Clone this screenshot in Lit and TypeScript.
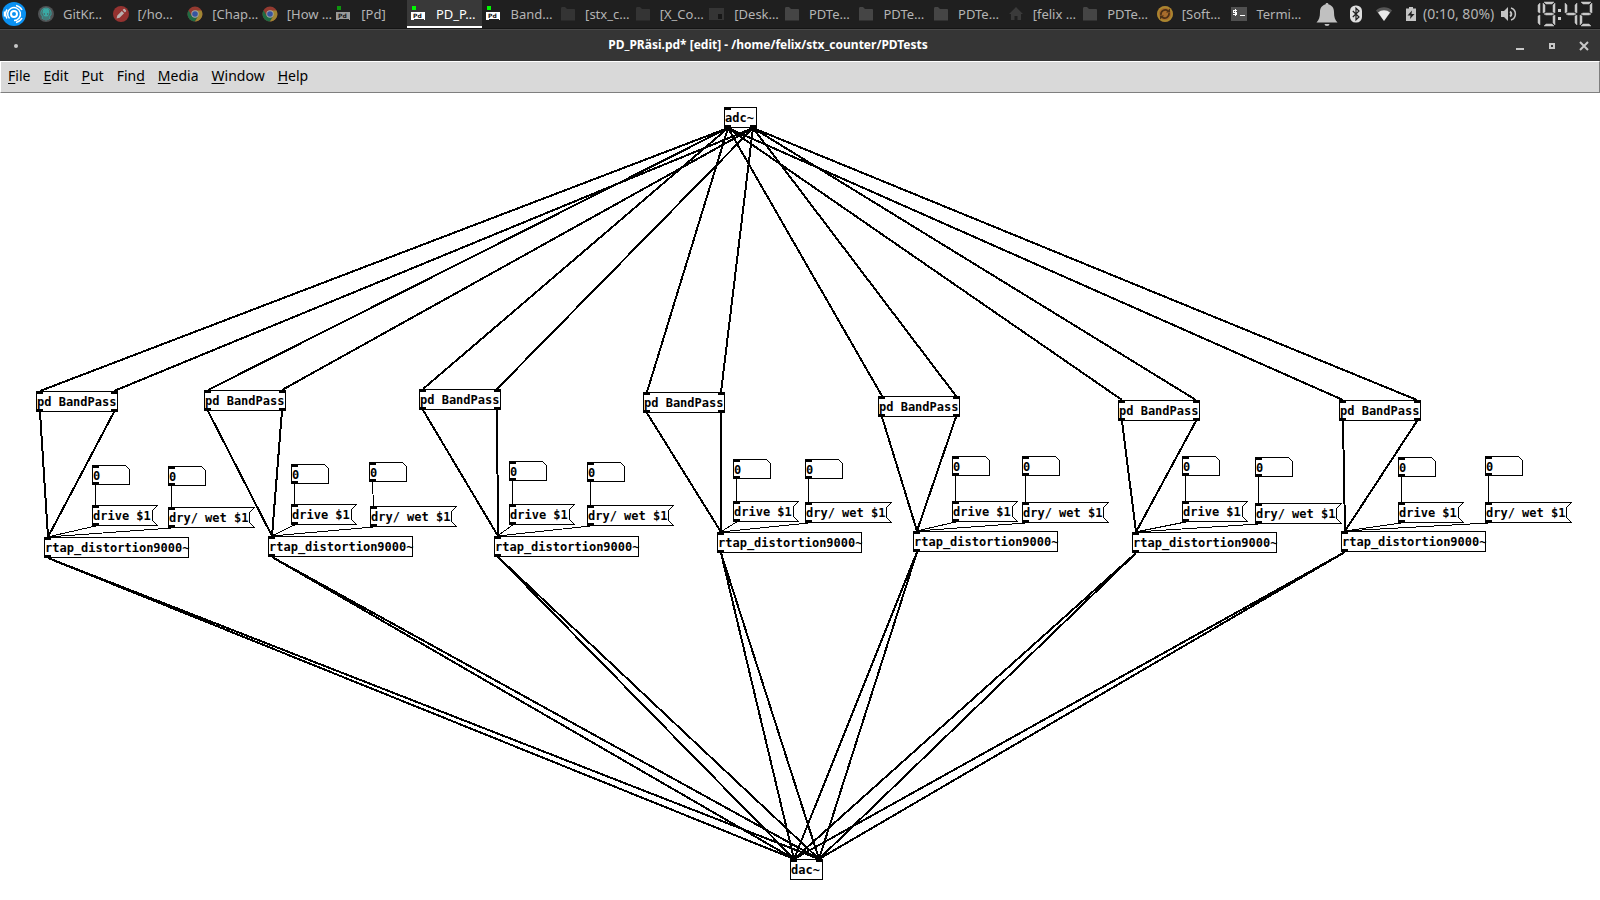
import { LitElement, html, svg, css, nothing } from "lit";
import { customElement, property } from "lit/decorators.js";
import { classMap } from "lit/directives/class-map.js";
import { styleMap } from "lit/directives/style-map.js";

type IconName =
  | "kraken" | "pencil" | "chrome" | "pd" | "folder" | "desktop"
  | "home" | "update" | "terminal";

interface Task {
  icon: IconName;
  label: string;
  minimized?: boolean;
  active?: boolean;
}

const TASKS: Task[] = [
  { icon: "kraken", label: "GitKr…" },
  { icon: "pencil", label: "[/ho…", minimized: true },
  { icon: "chrome", label: "[Chap…", minimized: true },
  { icon: "chrome", label: "[How …", minimized: true },
  { icon: "pd", label: "[Pd]", minimized: true },
  { icon: "pd", label: "PD_P…", active: true },
  { icon: "pd", label: "Band…" },
  { icon: "folder", label: "[stx_c…", minimized: true },
  { icon: "folder", label: "[X_Co…", minimized: true },
  { icon: "desktop", label: "[Desk…", minimized: true },
  { icon: "folder", label: "PDTe…" },
  { icon: "folder", label: "PDTe…" },
  { icon: "folder", label: "PDTe…" },
  { icon: "home", label: "[felix …", minimized: true },
  { icon: "folder", label: "PDTe…" },
  { icon: "update", label: "[Soft…", minimized: true },
  { icon: "terminal", label: "Termi…" },
];

const ICONS = {
  kraken: svg`
    <circle cx="8" cy="8" r="8" fill="#505355"/>
    <path d="M3 8.500C2.400 4.500 5 2 8 2s5.600 2.500 5 6.500L11.700 10V13M4.300 13v-3L3 8.500M6 14v-4M10 14v-4M8 10v4.500" fill="none" stroke="#3a9c98" stroke-width="1.100"/>
    <ellipse cx="8" cy="6.500" rx="3.600" ry="4" fill="#3aa9a4"/>
    <circle cx="6.300" cy="8" r=".7" fill="#505355"/><circle cx="9.700" cy="8" r=".7" fill="#505355"/>`,
  pencil: svg`
    <circle cx="8" cy="8" r="8" fill="#943230"/>
    <path d="M3.600 12.400l.7-3 4.500-4.500 2.300 2.300-4.500 4.500zM9.600 4.100l1-1a.8.8 0 0 1 1.200 0l1.100 1.100a.8.8 0 0 1 0 1.200l-1 1z" fill="#b9b0af"/>`,
  chrome: svg`
    <circle cx="8" cy="8" r="7.500" fill="#943a30"/>
    <path d="M1.500 4.250A7.500 7.500 0 0 0 8 15.500L11.200 9.900 8 8 4.800 9.900z" fill="#1f6b42"/>
    <path d="M8 15.500A7.500 7.500 0 0 0 14.500 4.500H8l3.200 5.400z" fill="#9f8633"/>
    <circle cx="8" cy="8" r="3.700" fill="#a6a6a2"/><circle cx="8" cy="8" r="2.800" fill="#36549f"/>`,
  folder: svg`<path d="M1 2.500C1 1.700 1.500 1 2.300 1H5l2 2h7c.6 0 1 .4 1 1v10.500H1z" fill="#454545"/>`,
  desktop: svg`<path d="M0 2h15v12H0z" fill="#353535"/><path d="M9 8h4v5H9z" fill="#171717"/>`,
  home: svg`<path d="M8 1l7 7h-2v6H9.500v-4h-3v4H3V8H1z" fill="#3a3a3a"/>`,
  update: svg`
    <circle cx="8" cy="8" r="8" fill="#a86c2c"/>
    <circle cx="8" cy="8" r="7" fill="none" stroke="#a88a30" stroke-width="1.500"/>
    <path d="M4 9A4.300 4.300 0 0 1 11 5M12 7A4.300 4.300 0 0 1 5 11" fill="none" stroke="#4a2f16" stroke-width="1.700"/>
    <path d="M9 6.500h4V2.500zM7 9.500H3v4z" fill="#4a2f16"/>`,
  terminal: svg`
    <path d="M0 1h16v14H0z" fill="#505050"/>
    <path d="M6 4.500H2.500v2H5.500v2H2M4 3v7M9 9.500h5" fill="none" stroke="#fff" stroke-width="1" shape-rendering="crispEdges"/>`,
};

@customElement("task-item")
class TaskItem extends LitElement {
  @property({ attribute: false }) task!: Task;

  static styles = css`
    :host { display: block; min-width: 0; }
    .task {
      box-sizing: border-box; width: 100%; height: 28px; margin: 0;
      padding: 0 0 0 4px; border: 0; background: none; color: #b4b4b4;
      display: flex; align-items: center; gap: 9px; white-space: nowrap;
      font: 13px/18px "Noto Sans", sans-serif; text-align: left;
    }
    .active { background: #393939; color: #fff; box-shadow: inset 0 -2px #fff; }
    .icon { flex: none; width: 16px; height: 16px; overflow: visible; }
    .minimized .shade { opacity: .55; }
    .tag { font: bold 6px "DejaVu Sans", sans-serif; }
  `;

  private pdIcon() {
    return svg`<g class="shade">
      <path d="M1 0h4v4H1z" fill="#00f800"/>
      <path d="M0 6h3v1h10V6h1v8h-1v-1H3v1H0z" fill="#fff"/>
      <path d="M0 6h13v7H0z" fill="#fff"/>
      <text class="tag" x="2" y="12" fill="#111">Pd</text>
    </g>`;
  }

  render() {
    const t = this.task;
    return html`
      <button class=${classMap({ task: true, active: !!t.active, minimized: !!t.minimized })}>
        <svg class="icon" viewBox="0 0 16 16" aria-hidden="true">
          ${t.icon === "pd" ? this.pdIcon()
            : svg`<g class=${t.icon === "folder" ? "shade" : ""}>${ICONS[t.icon]}</g>`}
        </svg>
        <span>${t.label}</span>
      </button>`;
  }
}

/* Segments in a 14x26 cell, in the order a b c d e f g. */
const SEGMENTS = [
  "M2 1h10l-2 2H4z", "M13 2v10l-2-1V4z", "M13 14v10l-2-2v-7z", "M4 23h6l2 2H2z",
  "M1 14l2 1v7l-2 2z", "M1 2l2 2v7l-2 1z", "M2 13l2-1h6l2 1-2 1H4z",
];
const LIT: Record<string, string> = {
  "1": "bc", "2": "abged", "4": "fgbc", "9": "abcdfg",
};

@customElement("segment-clock")
class SegmentClock extends LitElement {
  @property() time = "";

  static styles = css`
    :host { display: block; }
    .face { display: flex; align-items: center; gap: 1px; height: 27px; }
    .digit { width: 14px; height: 26px; }
    .slim { width: 4px; }
    .colon { width: 4px; height: 26px; margin: 0 1px; }
  `;

  private cell(ch: string) {
    if (ch === ":") {
      return html`<svg class="colon" viewBox="0 0 4 26"><path d="M0 8h3v3H0zM0 16h3v3H0z" fill="#cfcfcf"/></svg>`;
    }
    const lit = LIT[ch] ?? "";
    return html`
      <svg class=${classMap({ digit: true, slim: ch === "1" })} viewBox=${ch === "1" ? "10 0 4 26" : "0 0 14 26"}>
        ${SEGMENTS.map((d, i) => lit.includes("abcdefg"[i])
          ? svg`<path d=${d} fill="#c8c8c8" stroke="#c8c8c8" stroke-width=".5"/>` : nothing)}
      </svg>`;
  }

  render() {
    return html`<div class="face" role="img" aria-label=${this.time}>${[...this.time].map((c) => this.cell(c))}</div>`;
  }
}

@customElement("desktop-panel")
class DesktopPanel extends LitElement {
  static styles = css`
    :host { display: block; }
    .panel {
      display: flex; align-items: center; height: 28px; background: #1f1f1f;
      border-bottom: 1px solid #141414; color: #b4b4b4;
    }
    .start { width: 34px; height: 28px; padding: 0 0 0 2px; border: 0; background: none; display: flex; align-items: center; }
    .tasks { flex: 1; display: grid; grid-auto-flow: column; grid-auto-columns: minmax(0, 1fr); min-width: 0; }
    .tray {
      width: 298px; box-sizing: border-box; padding: 0 7px 0 14px; display: flex; align-items: center;
      font: 14px/18px "Noto Sans", sans-serif; white-space: nowrap;
    }
    .bell { margin-right: 12px; }
    .bluetooth { margin-right: 14px; }
    .wifi { margin-right: 13px; }
    .battery { margin-right: 6px; }
    .speaker { margin-left: 7px; }
    .clock { margin-left: auto; }
  `;

  render() {
    return html`
      <div class="panel">
        <button class="start" aria-label="Applications">
          <svg width="24" height="24" viewBox="0 0 24 24">
            <circle cx="12" cy="12" r="12" fill="#0a91f2"/>
            <circle cx="12" cy="12" r="3" fill="none" stroke="#fff" stroke-width="2"/>
            <path d="M7.500 16.500A6.400 6.400 0 1 1 12 18.400M5 7.500A8.500 8.500 0 0 0 5 16.500M2.500 9.500v5M14 3.500A9 9 0 0 1 20 8M20 16A9 9 0 0 1 14 20.500" fill="none" stroke="#fff" stroke-width="1.500"/>
          </svg>
        </button>
        <div class="tasks">${TASKS.map((t) => html`<task-item .task=${t}></task-item>`)}</div>
        <div class="tray">
          <svg class="bell" width="22" height="24" viewBox="0 0 22 24">
            <path d="M11 1c1 0 1.500.6 1.600 1.500C16 3.200 18 6 18 10c0 5 1 8 3.500 10.500H.5C3 18 4 15 4 10c0-4 2-6.800 5.400-7.500C9.500 1.600 10 1 11 1zM8.500 22h5a2.500 2 0 0 1-5 0z" fill="#c0c0c0"/>
          </svg>
          <svg class="bluetooth" width="12" height="18" viewBox="0 0 12 18">
            <rect width="12" height="17" y=".5" rx="5.500" fill="#dedede"/>
            <path d="M2.800 6l6.200 6-3 2.800V3.200L9 6l-6.200 6" fill="none" stroke="#1f1f1f" stroke-width="1.200"/>
          </svg>
          <svg class="wifi" width="16" height="16" viewBox="0 0 16 16">
            <path d="M0 4.500a11.500 11.500 0 0 1 16 0L8 15z" fill="#565656"/>
            <path d="M2 6.500a9 9 0 0 1 12 0L8 15z" fill="#e8e8e8"/>
          </svg>
          <svg class="battery" width="12" height="16" viewBox="0 0 12 16">
            <path d="M4 1h4v1.500h3V15H1V2.500h3z" fill="#c4c4c4"/>
            <path d="M7 4.500L2.500 9.500H5.500L5 13l4.500-5H6.500z" fill="#1f1f1f"/>
          </svg>
          <span>(0:10, 80%)</span>
          <svg class="speaker" width="16" height="16" viewBox="0 0 16 16">
            <path d="M0 5h3l4-4v14l-4-4H0z" fill="#c4c4c4"/>
            <path d="M9 5.500a3 3 0 0 1 0 5" fill="none" stroke="#c4c4c4" stroke-width="2"/>
            <path d="M10 2a6.300 6.300 0 0 1 0 12" fill="none" stroke="#c4c4c4" stroke-width="1.500"/>
          </svg>
          <segment-clock class="clock" time="19:42"></segment-clock>
        </div>
      </div>`;
  }
}

interface Voice {
  bandPass: [number, number];
  numbers: [number, number][];
  drive: [number, number];
  wet: [number, number];
  distortion: [number, number];
}

const VOICES: Voice[] = [
  { bandPass: [36, 298], numbers: [[92, 372], [168, 373]], drive: [92, 412], wet: [168, 414], distortion: [44, 444] },
  { bandPass: [204, 297], numbers: [[291, 371], [369, 369]], drive: [291, 411], wet: [370, 413], distortion: [268, 443] },
  { bandPass: [419, 296], numbers: [[509, 368], [587, 369]], drive: [509, 411], wet: [587, 412], distortion: [494, 443] },
  { bandPass: [643, 299], numbers: [[733, 366], [805, 366]], drive: [733, 408], wet: [805, 409], distortion: [717, 439] },
  { bandPass: [878, 303], numbers: [[952, 363], [1022, 363]], drive: [952, 408], wet: [1022, 409], distortion: [913, 438] },
  { bandPass: [1118, 307], numbers: [[1182, 363], [1255, 364]], drive: [1182, 408], wet: [1255, 410], distortion: [1132, 439] },
  { bandPass: [1339, 307], numbers: [[1398, 364], [1485, 363]], drive: [1398, 409], wet: [1485, 409], distortion: [1341, 438] },
];
const ADC: [number, number] = [724, 14];
const DAC: [number, number] = [790, 766];
const BOX_H = 21;
const NUMBER_H = 20;
const IO_W = 33;
const BAND_W = 82;
const DIST_W = 145;

type Kind = "object" | "message" | "number";

@customElement("patch-node")
class PatchNode extends LitElement {
  @property() kind: Kind = "object";
  @property() label = "";
  @property({ type: Number }) width = 0;
  /** Port corners in use: il, ir, ol, or. */
  @property({ attribute: false }) ports: string[] = [];

  static styles = css`
    :host { display: block; position: relative; color: #000; font: bold 12px/14px "DejaVu Sans Mono", monospace; }
    .frame { display: block; position: absolute; left: 0; top: 0; overflow: visible; }
    .text {
      box-sizing: border-box; display: block; position: relative; width: 100%; margin: 0;
      padding: 4px 0 3px 1px; border: 0; background: none; color: inherit; font: inherit;
      text-align: left; white-space: nowrap; outline: none;
    }
    .number { padding-bottom: 2px; }
  `;

  private outline(w: number, h: number) {
    if (this.kind === "number") return `M.5 .5H${w - 4.5}L${w - 0.5} 4.500V${h - 0.5}H.5Z`;
    if (this.kind === "message") return `M.5 .5H${w - 0.5}L${w - 5.5} 5.500V${h - 5.5}L${w - 0.5} ${h - 0.5}H.5Z`;
    return `M.5 .5H${w - 0.5}V${h - 0.5}H.5Z`;
  }

  render() {
    const w = this.width;
    const h = this.kind === "number" ? NUMBER_H : BOX_H;
    return html`
      <svg class="frame" width=${w} height=${h} shape-rendering="crispEdges">
        <path d=${this.outline(w, h)} fill="none" stroke="#000"/>
        ${this.ports.map((p) => svg`<rect x=${p[1] === "l" ? 0 : w - 7} y=${p[0] === "i" ? 0 : h - 3} width="7" height="3"/>`)}
      </svg>
      ${this.kind === "number"
        ? html`<input class="text number" aria-label="Number" .value=${this.label}>`
        : this.kind === "message"
          ? html`<button class="text">${this.label}</button>`
          : html`<div class="text">${this.label}</div>`}`;
  }
}

@customElement("patch-canvas")
class PatchCanvas extends LitElement {
  static styles = css`
    :host { display: block; flex: 1; position: relative; overflow: hidden; background: #fff; }
    .wires { position: absolute; inset: 0; width: 100%; height: 100%; pointer-events: none; }
    .signal { stroke: #000; stroke-width: 2; }
    .control { stroke: #000; stroke-width: 1; }
    .node { position: absolute; }
  `;

  private node(kind: Kind, label: string, [x, y]: [number, number], width: number, ports: string[]) {
    return html`<patch-node class="node" .kind=${kind} .label=${label} .width=${width} .ports=${ports}
      style=${styleMap({ left: `${x}px`, top: `${y}px`, width: `${width}px` })}></patch-node>`;
  }

  private signal(x1: number, y1: number, x2: number, y2: number) {
    return svg`<line class="signal" x1=${x1} y1=${y1} x2=${x2} y2=${y2}/>`;
  }

  private control(a: [number, number], h: number, b: [number, number]) {
    return svg`<line class="control" x1=${a[0] + 3.5} y1=${a[1] + h} x2=${b[0] + 3.5} y2=${b[1]}/>`;
  }

  private wires(v: Voice) {
    const [bx, by] = v.bandPass;
    const [dx, dy] = v.distortion;
    const left = 4;
    const bandRight = BAND_W - 4;
    const ioRight = IO_W - 4;
    return [
      this.signal(ADC[0] + left, ADC[1] + BOX_H, bx + left, by),
      this.signal(ADC[0] + ioRight, ADC[1] + BOX_H, bx + bandRight, by),
      this.signal(bx + left, by + BOX_H, dx + left, dy),
      this.signal(bx + bandRight, by + BOX_H, dx + left, dy),
      this.signal(dx + left, dy + BOX_H, DAC[0] + left, DAC[1]),
      this.signal(dx + left, dy + BOX_H, DAC[0] + ioRight, DAC[1]),
      this.control(v.numbers[0], NUMBER_H, v.drive),
      this.control(v.numbers[1], NUMBER_H, v.wet),
      this.control(v.drive, BOX_H, v.distortion),
      this.control(v.wet, BOX_H, v.distortion),
    ];
  }

  render() {
    return html`
      <svg class="wires" shape-rendering="crispEdges" aria-hidden="true">${VOICES.map((v) => this.wires(v))}</svg>
      ${this.node("object", "adc~", ADC, IO_W, ["il", "ol", "or"])}
      ${VOICES.map((v) => html`
        ${this.node("object", "pd BandPass", v.bandPass, BAND_W, ["il", "ir", "ol", "or"])}
        ${v.numbers.map((n) => this.node("number", "0", n, 38, ["il", "ol"]))}
        ${this.node("message", "drive $1", v.drive, 66, ["il", "ol"])}
        ${this.node("message", "dry/ wet $1", v.wet, 87, ["il", "ol"])}
        ${this.node("object", "rtap_distortion9000~", v.distortion, DIST_W, ["il", "ol"])}`)}
      ${this.node("object", "dac~", DAC, IO_W, ["il", "ir"])}`;
  }
}

/* Menu titles split around their mnemonic letter. */
const MENUS: [string, string, string][] = [
  ["", "F", "ile"], ["", "E", "dit"], ["", "P", "ut"], ["Fin", "d", ""],
  ["", "M", "edia"], ["", "W", "indow"], ["", "H", "elp"],
];

@customElement("app-root")
class AppRoot extends LitElement {
  static styles = css`
    :host { display: flex; flex-direction: column; height: 100vh; overflow: hidden; background: #fff; }
    .titlebar {
      display: flex; align-items: center; height: 31px; background: #353535;
      border-top: 1px solid #4a4a4a; color: #fff;
    }
    .dot { width: 32px; display: flex; justify-content: center; }
    .title { flex: 1; margin: 0; padding-bottom: 2px; text-align: center; font: bold 12px/18px "Noto Sans", sans-serif; }
    .controls { display: flex; width: 96px; }
    .control { flex: 1; height: 30px; padding: 0; border: 0; background: none; display: flex; align-items: center; justify-content: center; }
    .menubar {
      display: flex; align-items: center; height: 30px; background: #d9d9d9;
      border: 1px solid #fff; border-right-color: #7f7f7f; border-bottom-color: #7f7f7f;
    }
    .menu { height: 28px; padding: 0 6px 2px 7px; border: 0; background: none; color: #000; font: 14px/18px "Noto Sans", sans-serif; }
    .key { text-decoration: underline; text-underline-offset: 2px; text-decoration-thickness: 1px; text-decoration-skip-ink: none; }
  `;

  render() {
    return html`
      <desktop-panel></desktop-panel>
      <div class="titlebar">
        <div class="dot"><svg width="4" height="4"><circle cx="2" cy="2" r="2" fill="#c8c8c8"/></svg></div>
        <h1 class="title">PD_PRäsi.pd* [edit] - /home/felix/stx_counter/PDTests</h1>
        <div class="controls">
          <button class="control" aria-label="Minimize"><svg width="10" height="10"><path d="M1 7h8v2H1z" fill="#c8c8c8"/></svg></button>
          <button class="control" aria-label="Maximize"><svg width="6" height="6"><path d="M1 1h4v4H1z" fill="none" stroke="#c8c8c8" stroke-width="2"/></svg></button>
          <button class="control" aria-label="Close"><svg width="10" height="10"><path d="M1 1l8 8M9 1L1 9" stroke="#c8c8c8" stroke-width="2"/></svg></button>
        </div>
      </div>
      <nav class="menubar">
        ${MENUS.map(([a, k, b]) => html`<button class="menu">${a}<span class="key">${k}</span>${b}</button>`)}
      </nav>
      <patch-canvas></patch-canvas>`;
  }
}
